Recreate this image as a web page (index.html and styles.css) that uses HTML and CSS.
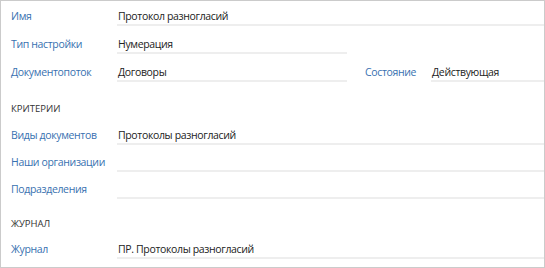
FILE: index.html
```html
<!DOCTYPE html>
<html lang="ru">
<head>
<meta charset="utf-8">
<link rel="stylesheet" href="styles.css">
</head>
<body>
<div class="panel">
  <div class="row row-first">
    <span class="label">Имя</span>
    <span class="field field-wide">Протокол разногласий</span>
  </div>
  <div class="row row-top">
    <span class="label">Тип настройки</span>
    <span class="field field-narrow">Нумерация</span>
  </div>
  <div class="row row-top">
    <span class="label">Документопоток</span>
    <span class="field field-narrow">Договоры</span>
    <span class="label label-state">Состояние</span>
    <span class="field field-wide">Действующая</span>
  </div>
  <div class="heading heading-criteria">КРИТЕРИИ</div>
  <div class="row row-list">
    <span class="label">Виды документов</span>
    <span class="field field-wide">Протоколы разногласий</span>
  </div>
  <div class="row row-list">
    <span class="label">Наши организации</span>
    <span class="field field-wide"></span>
  </div>
  <div class="row row-list">
    <span class="label">Подразделения</span>
    <span class="field field-wide"></span>
  </div>
  <div class="heading heading-journal">ЖУРНАЛ</div>
  <div class="row row-list">
    <span class="label">Журнал</span>
    <span class="field field-wide">ПР. Протоколы разногласий</span>
  </div>
</div>
</body>
</html>
```
FILE: styles.css
```css
* { box-sizing: border-box; }
html, body { margin: 0; padding: 0; background: #ffffff; }
body {
  font-family: "Open Sans", "Noto Sans", sans-serif;
  font-size: 10.5px;
  letter-spacing: -0.35px;
  color: #222222;
}
.panel {
  width: 545px;
  height: 268px;
  border: 1px solid #cbcbcb;
  padding-left: 10px;
  overflow: hidden;
}
.row {
  display: flex;
  align-items: flex-end;
}
.row-first { height: 25px; }
.row-top { height: 28px; }
.row-list { height: 27px; }
.label {
  flex: 0 0 106px;
  line-height: 16px;
  padding-bottom: 2px;
  color: #3871b0;
  white-space: nowrap;
}
.label-state {
  flex: 0 0 66px;
  margin-left: 18px;
}
.field {
  display: block;
  height: 18px;
  line-height: 16px;
  padding-left: 1px;
  border-bottom: 2px solid #eeeeee;
  color: #222222;
  white-space: nowrap;
}
.field-wide { flex: 1 1 auto; }
.field-narrow { flex: 0 0 230px; }
.heading {
  display: flex;
  align-items: flex-end;
  font-size: 9.5px;
  letter-spacing: 0;
  line-height: 14px;
  color: #333333;
}
.heading-criteria { height: 36px; padding-bottom: 2px; }
.heading-journal { height: 33px; padding-bottom: 1px; }
```
